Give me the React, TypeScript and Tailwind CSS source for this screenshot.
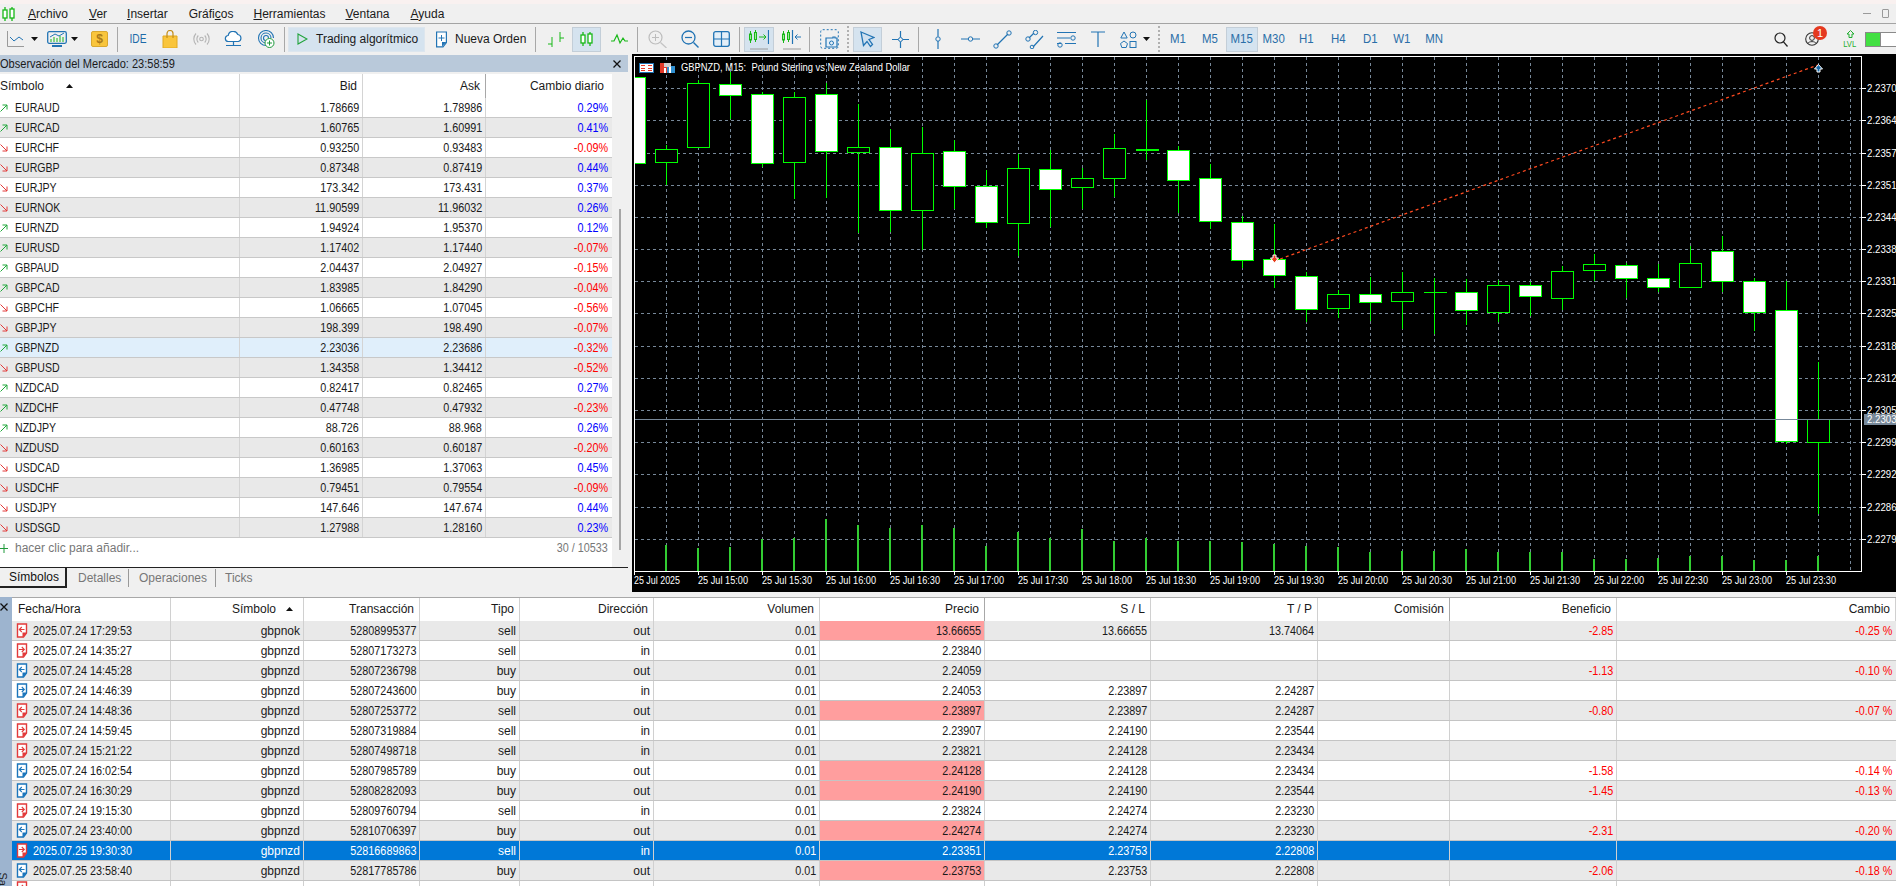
import type { ReactNode } from "react";

const FONT = "font-['Liberation_Sans',Arial,sans-serif]";
const BLUE = "#2274b4";
const GREEN = "#18b818";

// --- market watch data ---
const market: [string, boolean, string, string, string][] = [
  ["EURAUD", true, "1.78669", "1.78986", "0.29%"],
  ["EURCAD", true, "1.60765", "1.60991", "0.41%"],
  ["EURCHF", false, "0.93250", "0.93483", "-0.09%"],
  ["EURGBP", false, "0.87348", "0.87419", "0.44%"],
  ["EURJPY", false, "173.342", "173.431", "0.37%"],
  ["EURNOK", false, "11.90599", "11.96032", "0.26%"],
  ["EURNZD", true, "1.94924", "1.95370", "0.12%"],
  ["EURUSD", true, "1.17402", "1.17440", "-0.07%"],
  ["GBPAUD", true, "2.04437", "2.04927", "-0.15%"],
  ["GBPCAD", true, "1.83985", "1.84290", "-0.04%"],
  ["GBPCHF", false, "1.06665", "1.07045", "-0.56%"],
  ["GBPJPY", false, "198.399", "198.490", "-0.07%"],
  ["GBPNZD", true, "2.23036", "2.23686", "-0.32%"],
  ["GBPUSD", false, "1.34358", "1.34412", "-0.52%"],
  ["NZDCAD", true, "0.82417", "0.82465", "0.27%"],
  ["NZDCHF", true, "0.47748", "0.47932", "-0.23%"],
  ["NZDJPY", true, "88.726", "88.968", "0.26%"],
  ["NZDUSD", false, "0.60163", "0.60187", "-0.20%"],
  ["USDCAD", false, "1.36985", "1.37063", "0.45%"],
  ["USDCHF", false, "0.79451", "0.79554", "-0.09%"],
  ["USDJPY", false, "147.646", "147.674", "0.44%"],
  ["USDSGD", false, "1.27988", "1.28160", "0.23%"],
];

// --- history data ---
type Deal = {
  d: string; s: string; t: string; k: string; dir: string; p: string;
  sl?: string; tp?: string; b?: string; c?: string;
};
const deals: Deal[] = [
  { d: "2025.07.24 17:29:53", s: "gbpnok", t: "52808995377", k: "sell", dir: "out", p: "13.66655", sl: "13.66655", tp: "13.74064", b: "-2.85", c: "-0.25 %" },
  { d: "2025.07.24 14:35:27", s: "gbpnzd", t: "52807173273", k: "sell", dir: "in", p: "2.23840" },
  { d: "2025.07.24 14:45:28", s: "gbpnzd", t: "52807236798", k: "buy", dir: "out", p: "2.24059", b: "-1.13", c: "-0.10 %" },
  { d: "2025.07.24 14:46:39", s: "gbpnzd", t: "52807243600", k: "buy", dir: "in", p: "2.24053", sl: "2.23897", tp: "2.24287" },
  { d: "2025.07.24 14:48:36", s: "gbpnzd", t: "52807253772", k: "sell", dir: "out", p: "2.23897", sl: "2.23897", tp: "2.24287", b: "-0.80", c: "-0.07 %" },
  { d: "2025.07.24 14:59:45", s: "gbpnzd", t: "52807319884", k: "sell", dir: "in", p: "2.23907", sl: "2.24190", tp: "2.23544" },
  { d: "2025.07.24 15:21:22", s: "gbpnzd", t: "52807498718", k: "sell", dir: "in", p: "2.23821", sl: "2.24128", tp: "2.23434" },
  { d: "2025.07.24 16:02:54", s: "gbpnzd", t: "52807985789", k: "buy", dir: "out", p: "2.24128", sl: "2.24128", tp: "2.23434", b: "-1.58", c: "-0.14 %" },
  { d: "2025.07.24 16:30:29", s: "gbpnzd", t: "52808282093", k: "buy", dir: "out", p: "2.24190", sl: "2.24190", tp: "2.23544", b: "-1.45", c: "-0.13 %" },
  { d: "2025.07.24 19:15:30", s: "gbpnzd", t: "52809760794", k: "sell", dir: "in", p: "2.23824", sl: "2.24274", tp: "2.23230" },
  { d: "2025.07.24 23:40:00", s: "gbpnzd", t: "52810706397", k: "buy", dir: "out", p: "2.24274", sl: "2.24274", tp: "2.23230", b: "-2.31", c: "-0.20 %" },
  { d: "2025.07.25 19:30:30", s: "gbpnzd", t: "52816689863", k: "sell", dir: "in", p: "2.23351", sl: "2.23753", tp: "2.22808" },
  { d: "2025.07.25 23:58:40", s: "gbpnzd", t: "52817785786", k: "buy", dir: "out", p: "2.23753", sl: "2.23753", tp: "2.22808", b: "-2.06", c: "-0.18 %" },
];

// --- candles: [k, bodyTop, bodyBottom, wickTop, wickBottom, white], y = 60 + v / 3 ---
const candles: [number, number, number, number, number, boolean][] = [
  [-1, 52, 310, 52, 310, true], [0, 268, 305, 255, 375, false], [1, 70, 260, 60, 265, false],
  [2, 73, 106, 35, 178, true], [3, 103, 310, 95, 322, true], [4, 112, 307, 95, 416, false],
  [5, 103, 274, 68, 413, true], [6, 262, 277, 133, 518, false], [7, 262, 451, 208, 517, true],
  [8, 280, 451, 202, 571, false], [9, 274, 379, 240, 446, true], [10, 379, 487, 331, 503, true],
  [11, 325, 490, 283, 589, false], [12, 328, 388, 271, 500, true], [13, 355, 382, 325, 446, false],
  [14, 265, 355, 223, 410, false], [15, 267, 272, 121, 301, false], [16, 271, 361, 259, 460, true],
  [17, 355, 484, 313, 506, true], [18, 487, 601, 469, 625, true], [19, 598, 646, 493, 684, true],
  [20, 649, 748, 637, 787, true], [21, 703, 745, 690, 773, false], [22, 703, 727, 652, 784, true],
  [23, 697, 724, 637, 806, false], [24, 697, 697, 655, 823, false], [25, 697, 751, 658, 795, true],
  [26, 676, 757, 660, 787, false], [27, 676, 709, 665, 769, true], [28, 634, 715, 619, 751, false],
  [29, 613, 631, 583, 664, false], [30, 616, 655, 610, 715, true], [31, 655, 682, 612, 697, true],
  [32, 610, 682, 558, 682, false], [33, 574, 664, 529, 697, true], [34, 664, 757, 655, 812, true],
  [35, 751, 1144, 664, 1153, true], [36, 1078, 1147, 907, 1363, false],
];
const volumes = [
  615, 624, 621, 598, 594, 537, 555, 564, 554, 564, 618, 576, 594, 567, 603, 594, 603, 603, 606,
  612, 618, 621, 636, 633, 633, 627, 636, 636, 636, 657, 657, 654, 648, 648, 660, 660, 648,
];
const gridY = [88, 120, 153, 185, 217, 249, 281, 313, 346, 378, 410, 442, 474, 507, 539];
const prices = ["2.23705", "2.23640", "2.23575", "2.23510", "2.23445", "2.23380", "2.23315", "2.23250", "2.23185", "2.23120", "2.23055", "2.22990", "2.22925", "2.22860", "2.22795"];
const times = ["15:00", "15:30", "16:00", "16:30", "17:00", "17:30", "18:00", "18:30", "19:00", "19:30", "20:00", "20:30", "21:00", "21:30", "22:00", "22:30", "23:00", "23:30"];
const gridX = Array.from({ length: 38 }, (_, k) => 666 + 32 * k);

function Ic({ w, h = 16, className, children }: { w: number; h?: number; className?: string; children: ReactNode }) {
  return (
    <svg width={w} height={h} viewBox={`0 0 ${w} ${h}`} fill="none" className={`shrink-0 ${className ?? ""}`}>
      {children}
    </svg>
  );
}

function Tri({ className }: { className: string }) {
  return (
    <svg width="7" height="4" viewBox="0 0 7 4" className={`shrink-0 ${className}`}>
      <polygon points="0,0 7,0 3.5,4" fill="#111" />
    </svg>
  );
}

function Sep({ className }: { className: string }) {
  return <div className={`w-px h-[25px] bg-[#a8a8a8] shrink-0 ${className}`} />;
}

function Grip({ className }: { className: string }) {
  return <div className={`w-[2px] h-[26px] shrink-0 border-l-2 border-dotted border-[#b0b0b0] ${className}`} />;
}

function Candles({ c = "#18b818" }: { c?: string }) {
  return (
    <g stroke={c} strokeWidth="1.3">
      <path d="M3 1V15M10 1V15" />
      <rect x="1" y="4" width="4" height="8" fill="#fff" />
      <rect x="8" y="3" width="4" height="9" fill="#fff" />
    </g>
  );
}

// the narrow pair of candles on the autoscroll and chart shift buttons
function MiniCandles() {
  return (
    <g stroke="#18b818">
      <path d="M1.500 2V14M6.500 1V13" />
      <rect x=".5" y="5" width="2" height="6" fill="#9be89b" />
      <rect x="5.500" y="3.500" width="2" height="7" fill="#9be89b" />
    </g>
  );
}

function ActiveBtn({ w, className, children }: { w: string; className: string; children: ReactNode }) {
  return (
    <div className={`${w} ${className} h-[25px] shrink-0 flex items-center justify-center bg-[#d5e3ef] border border-[#c3ced8]`}>
      {children}
    </div>
  );
}

function Toolbar() {
  const periods = ["M1", "M5", "M15", "M30", "H1", "H4", "D1", "W1", "MN"];
  return (
    <div className="h-[30px] flex items-center bg-[#f0f0f0] shrink-0">
      <Ic w={17} className="ml-[7px]">
        <path d="M.5 0V15.5H17" stroke="#9a9a9a" />
        <path d="M3 6l4 4 5-4 4 3" stroke={BLUE} />
      </Ic>
      <Tri className="ml-[7px]" />
      <Ic w={20} className="ml-[9px]">
        <rect x=".7" y=".7" width="18.6" height="11.6" rx="1.5" stroke={BLUE} strokeWidth="1.3" />
        <path d="M4 11V8M7 11V6M10 11V7M13 11V5M16 11V6" stroke={GREEN} />
        <path d="M3 6l5-3 4 2 5-3" stroke={BLUE} />
        <path d="M5 15h10" stroke={BLUE} strokeWidth="2" />
      </Ic>
      <Tri className="ml-[4px]" />
      <div className="ml-[13px] w-[17px] h-[16px] rounded-[2px] bg-[#f9c53c] border border-[#d9a830] flex items-center justify-center text-[12px] font-bold text-[#a9791a] shrink-0">$</div>
      <Sep className="ml-[9px]" />
      <div className="ml-[11px] w-[17px] text-[12px] text-[#1d6aa8] flex justify-center shrink-0">
        <span className="inline-block scale-x-[0.85]">IDE</span>
      </div>
      <Ic w={16} h={18} className="ml-[16px]">
        <path d="M1 6h14v12H1z" fill="#f9c53c" stroke="#e0a820" />
        <path d="M5 8V3.5a3 3 0 0 1 6 0V8" stroke="#c48e18" strokeWidth="1.2" />
      </Ic>
      <Ic w={17} className="ml-[15px]">
        <g stroke="#b4b4b4" strokeWidth="1.1">
          <circle cx="8.5" cy="8" r="1.8" />
          <path d="M5.3 4.5a5 5 0 0 0 0 7M11.7 4.5a5 5 0 0 1 0 7M3 2.5a8 8 0 0 0 0 11M14 2.5a8 8 0 0 1 0 11" />
        </g>
      </Ic>
      <Ic w={19} className="ml-[14px]">
        <path d="M4.5 10.5a3 3 0 0 1-.3-6 5 5 0 0 1 9.6-1 3.6 3.6 0 0 1 .6 7z" stroke={BLUE} strokeWidth="1.2" fill="#fff" />
        <path d="M9.5 10.5V14M2 14.5h15" stroke={BLUE} strokeWidth="1.2" />
      </Ic>
      <Ic w={18} h={18} className="ml-[14px]">
        <g stroke={BLUE} strokeWidth="1.1">
          <path d="M9 15.5A7.5 7.5 0 1 1 16.5 8" />
          <path d="M8.5 13A5 5 0 1 1 14 8" />
          <path d="M8.5 10.5A2.5 2.5 0 1 1 11.5 8" />
        </g>
        <circle cx="12.5" cy="13" r="4.5" fill="#fff" stroke="#1e9a3c" />
        <path d="M12.5 10.5v5M10 13h5" stroke="#1e9a3c" />
      </Ic>
      <Sep className="ml-[9px]" />
      <div className="ml-[3px] w-[137px] h-[25px] shrink-0 bg-[#d5e3ef] border border-[#dde6ee] flex items-center">
        <Ic w={11} h={12} className="ml-[8px]">
          <path d="M1 1l9 5-9 5z" stroke="#1fa33a" strokeWidth="1.1" />
        </Ic>
        <span className="ml-[8px] text-[12px] text-[#1a1a1a] whitespace-nowrap">Trading algorítmico</span>
      </div>
      <Ic w={13} h={17} className="ml-[10px]">
        <path d="M1.6 1h9.8v10.5L8 15.8H1.6z" stroke={BLUE} strokeWidth="1.2" fill="#fff" />
        <path d="M7 15.5l4.5-4.5H7z" fill={BLUE} />
        <path d="M6.5 4v6M3.5 7h6" stroke={BLUE} />
      </Ic>
      <span className="ml-[7px] w-[70px] text-[12px] text-[#1a1a1a] whitespace-nowrap shrink-0">Nueva Orden</span>
      <Sep className="ml-[10px]" />
      <Ic w={17} className="ml-[11px]">
        <path d="M5 6V16M1 13h4M13 1V11M13 7h4" stroke={GREEN} />
      </Ic>
      <ActiveBtn w="w-[29px]" className="ml-[8px]">
        <Ic w={13}><Candles /></Ic>
      </ActiveBtn>
      <Ic w={17} className="ml-[10px]">
        <path d="M0 10h3l3-6 3 8 3-5 2 3h3" stroke={GREEN} strokeWidth="1.2" />
      </Ic>
      <Sep className="ml-[9px]" />
      <Ic w={19} h={18} className="ml-[10px]">
        <circle cx="7.5" cy="7.5" r="6.5" stroke="#bdbdbd" strokeWidth="1.2" />
        <path d="M12.5 12.5l6 5.5" stroke="#c4c4c4" strokeWidth="1.3" />
        <path d="M7.5 4v7M4 7.5h7" stroke="#bdbdbd" />
      </Ic>
      <Ic w={18} h={18} className="ml-[14px]">
        <circle cx="7.5" cy="7.5" r="6.5" stroke={BLUE} strokeWidth="1.3" />
        <path d="M12.5 12.5l5 5" stroke={BLUE} strokeWidth="1.4" />
        <path d="M4 7.5h7" stroke={BLUE} strokeWidth="1.2" />
      </Ic>
      <Ic w={17} className="ml-[14px]">
        <rect x=".7" y=".7" width="15.6" height="14.6" rx="2" fill="#e4eff8" stroke={BLUE} strokeWidth="1.3" />
        <path d="M8.5 1v14M1 8h15" stroke={BLUE} strokeWidth="1.2" />
      </Ic>
      <Sep className="ml-[9px]" />
      <ActiveBtn w="w-[30px]" className="ml-[4px]">
        <Ic w={20} h={21}>
          <MiniCandles />
          <path d="M10 8h7M14.500 5.500L17 8l-2.500 2.500" stroke={GREEN} />
          <path d="M19.500 1V15" stroke={BLUE} strokeWidth="1.2" />
          <path d="M1 20h18" stroke="#9a9a9a" />
        </Ic>
      </ActiveBtn>
      <Ic w={19} h={21} className="ml-[8px]">
        <MiniCandles />
        <path d="M10.500 1V15" stroke={BLUE} strokeWidth="1.2" />
        <path d="M19 8h-6M15.500 5.500L13 8l2.500 2.500" stroke={BLUE} />
        <path d="M1 20h18" stroke="#9a9a9a" />
      </Ic>
      <Sep className="ml-[8px]" />
      <Ic w={19} h={20} className="ml-[10px]">
        <rect x=".7" y=".7" width="17.6" height="18.6" rx="2" stroke={BLUE} strokeDasharray="2 2" />
        <path d="M6 9h7v-1h2v1h2v9H6z" fill="#e4eff8" stroke={BLUE} strokeWidth="1.2" />
        <circle cx="11.5" cy="14" r="2" stroke={BLUE} />
      </Ic>
      <Grip className="ml-[8px]" />
      <ActiveBtn w="w-[29px]" className="ml-[4px]">
        <Ic w={15} h={17}>
          <path d="M1 1l13 5.5-5 2 3.5 5-2 2-3.5-5-3.5 4z" fill="#cfe0ef" stroke={BLUE} strokeWidth="1.3" />
        </Ic>
      </ActiveBtn>
      <Ic w={17} h={17} className="ml-[10px]">
        <path d="M8.5 0v6M8.5 11v6M0 8.5h6M11 8.5h6" stroke={BLUE} strokeWidth="1.2" />
        <circle cx="8.5" cy="8.5" r="2" stroke={BLUE} />
      </Ic>
      <Sep className="ml-[9px]" />
      <Ic w={10} h={20} className="ml-[14px]">
        <path d="M5 0v7.5M5 12v8" stroke={BLUE} strokeWidth="1.2" />
        <circle cx="5" cy="10" r="2.2" stroke={BLUE} />
      </Ic>
      <Ic w={19} h={10} className="ml-[18px]">
        <path d="M0 5h7M12 5h7" stroke={BLUE} strokeWidth="1.2" />
        <circle cx="9.5" cy="5" r="2.2" stroke={BLUE} />
      </Ic>
      <Ic w={19} h={19} className="ml-[13px]">
        <path d="M4 15L15 4" stroke={BLUE} strokeWidth="1.2" />
        <circle cx="3" cy="16" r="2.2" stroke={BLUE} />
        <circle cx="16" cy="3" r="2.2" stroke={BLUE} />
      </Ic>
      <Ic w={19} h={19} className="ml-[13px]">
        <path d="M4 8l5-5M8 17l10-11" stroke={BLUE} strokeWidth="1.2" />
        <circle cx="3" cy="9" r="2.2" stroke={BLUE} />
        <circle cx="10.5" cy="2.5" r="2.2" stroke={BLUE} />
        <circle cx="7" cy="17" r="1.8" stroke={BLUE} />
      </Ic>
      <Ic w={19} h={17} className="ml-[13px]">
        <path d="M0 1.5h19M0 7h13M0 12.5h4M8 12.5h11" stroke={BLUE} strokeWidth="1.2" />
        <circle cx="16" cy="7" r="2.2" stroke={BLUE} />
        <circle cx="3" cy="14" r="2.2" stroke={BLUE} />
      </Ic>
      <Ic w={14} h={16} className="ml-[15px]">
        <path d="M0 1h14M7 1v15" stroke={BLUE} strokeWidth="1.2" />
      </Ic>
      <Ic w={17} h={17} className="ml-[15px]">
        <path d="M4 1l3.2 6H.8z" stroke={BLUE} />
        <circle cx="13" cy="4" r="3" stroke={BLUE} />
        <path d="M4 10l3.5 2.6-1.3 3.9H1.8L.5 12.6z" stroke={BLUE} />
        <rect x="10" y="10.5" width="6" height="6" stroke={BLUE} />
      </Ic>
      <Tri className="ml-[6px]" />
      <Grip className="ml-[8px]" />
      <div className="ml-[2px] flex shrink-0">
        {periods.map((p) => (
          <div key={p} className={`w-[32px] h-[25px] flex items-center justify-center text-[13px] text-[#2a6ea8] ${p === "M15" ? "bg-[#d5e3ef] border border-[#c3ced8]" : ""}`}>
            <span className="inline-block scale-x-[0.88]">{p}</span>
          </div>
        ))}
      </div>
      <div className="ml-auto flex items-center shrink-0">
        <Ic w={14} h={15}>
          <circle cx="6" cy="6" r="5" stroke="#222" strokeWidth="1.2" />
          <path d="M9.5 9.8l4 4.7" stroke="#222" strokeWidth="1.3" />
        </Ic>
        <div className="relative ml-[17px] w-[14px] h-[14px]">
          <Ic w={14} h={14}>
            <circle cx="7" cy="7" r="6.3" stroke="#333" strokeWidth="1.1" />
            <circle cx="7" cy="6" r="2.4" stroke="#333" />
            <path d="M2.8 11.5c1-2.5 7.4-2.5 8.4 0" stroke="#333" />
          </Ic>
          <div className="absolute left-[8px] top-[-6px] w-[14px] h-[14px] rounded-full bg-[#e5391f] text-white text-[11px] flex items-center justify-center">1</div>
        </div>
        <div className="ml-[25px] w-[12px] flex flex-col items-center text-[#1fae2f] leading-none">
          <Ic w={9} h={8}>
            <path d="M4.5.5L8 4H6v3.5H3V4H1z" stroke="#1fae2f" />
          </Ic>
          <span className="mt-[2px] text-[9px] inline-block scale-x-[0.85]">LVL</span>
        </div>
        <div className="ml-[9px] w-[31px] h-[15px] bg-white border border-[#8a8a8a] border-r-0 flex">
          <div className="w-[15px] bg-[#42e042] border-r border-[#8a8a8a]" />
        </div>
      </div>
    </div>
  );
}

function TrendArrow({ up }: { up: boolean }) {
  const c = up ? "#1fa83a" : "#e23a3a";
  return (
    <svg width="8" height="8" viewBox="0 0 8 8" fill="none" className="shrink-0">
      <path d={up ? "M.5 7.5L7 1M2.5 1H7V5.5" : "M.5.5L7 7M2.5 7H7V2.5"} stroke={c} strokeWidth="1" />
    </svg>
  );
}

function SortTri({ className }: { className: string }) {
  return (
    <svg width="7" height="4" viewBox="0 0 7 4" className={className}>
      <polygon points="0,4 7,4 3.5,0" fill="#111" />
    </svg>
  );
}

function MarketWatch() {
  return (
    <div className="w-[632px] shrink-0 flex flex-col">
      <div className="mt-px h-[17px] w-[628px] bg-[#b9c9da] flex items-center justify-between text-[12px] text-[#1a1a1a]">
        <span className="inline-block origin-left scale-x-[0.92] whitespace-nowrap">Observación del Mercado: 23:58:59</span>
        <svg width="8" height="8" viewBox="0 0 8 8" className="mr-[7px]"><path d="M.5.5l7 7M7.5.5l-7 7" stroke="#111" strokeWidth="1.3" /></svg>
      </div>
      <div className="mt-[2px] h-[493px] flex">
        <div className="w-[612px] bg-white text-[12px] text-[#1a1a1a]">
          <div className="h-[24px] grid grid-cols-[240px_123px_123px_126px]">
            <div className="flex items-center border-r border-[#d4d4d4]">
              <span>Símbolo</span>
              <SortTri className="ml-[22px]" />
            </div>
            <div className="flex items-center justify-end pr-[5px] border-r border-[#d4d4d4]">Bid</div>
            <div className="flex items-center justify-end pr-[5px] border-r border-[#a8a8a8]">Ask</div>
            <div className="flex items-center justify-end pr-[8px]">Cambio diario</div>
          </div>
          {market.map(([sym, up, bid, ask, chg], i) => (
            <div
              key={sym}
              className={`h-[20px] grid grid-cols-[240px_123px_123px_126px] border-b border-[#c8c8c8] ${sym === "GBPNZD" ? "bg-[#e0effb]" : i % 2 === 1 ? "bg-[#e9e9e9]" : "bg-white"}`}
            >
              <div className="flex items-center border-r border-[#d4d4d4]">
                <TrendArrow up={up} />
                <span className="ml-[7px] inline-block origin-left scale-x-[0.88]">{sym}</span>
              </div>
              <div className="flex items-center justify-end pr-[3px] border-r border-[#d4d4d4]">
                <span className="inline-block origin-right scale-x-90">{bid}</span>
              </div>
              <div className="flex items-center justify-end pr-[3px] border-r border-[#d4d4d4]">
                <span className="inline-block origin-right scale-x-90">{ask}</span>
              </div>
              <div className={`flex items-center justify-end pr-[4px] ${chg.startsWith("-") ? "text-[#ff0000]" : "text-[#0000ff]"}`}>
                <span className="inline-block origin-right scale-x-90">{chg}</span>
              </div>
            </div>
          ))}
          <div className="h-[20px] flex items-center justify-between text-[#777]">
            <div className="flex items-center">
              <svg width="8" height="9" viewBox="0 0 8 9" className="shrink-0"><path d="M4 0v9M0 4.5h8" stroke="#1f9a3a" /></svg>
              <span className="ml-[7px]">hacer clic para añadir...</span>
            </div>
            <span className="mr-[4px] inline-block origin-right scale-x-90">30 / 10533</span>
          </div>
        </div>
        <div className="flex-1 pl-[7px] pt-[135px]">
          <div className="w-[2px] h-[341px] bg-[#a6a6a6]" />
        </div>
      </div>
      <div className="w-[628px] h-[21px] border-t border-[#222] flex text-[12px] text-[#777]">
        <div className="w-[67px] h-[20px] pl-[9px] flex items-center text-[#111] border-r-2 border-b-2 border-[#222]">Símbolos</div>
        <div className="w-[62px] h-[18px] mt-[1px] pl-[11px] flex items-center border-r border-[#999]">Detalles</div>
        <div className="w-[87px] h-[18px] mt-[1px] pl-[10px] flex items-center border-r border-[#999]">Operaciones</div>
        <div className="h-[18px] mt-[1px] pl-[9px] flex items-center">Ticks</div>
      </div>
    </div>
  );
}

function ChartIcons() {
  return (
    <g shapeRendering="crispEdges">
      <rect x="639.5" y="63.5" width="14" height="9" fill="#fff" stroke="#1b6fb0" />
      <path d="M641 65.5h4M641 68h4M641 70.5h4M648 65.5h4M648 68h4M648 70.5h4" stroke="#e23a2a" />
      <path d="M660 63h7v10h-7z" fill="#e23a2a" />
      <path d="M667 66h8v7h-8z" fill="#2f8fd0" />
      <path d="M664 63h7v4h-7z" fill="#cfcfcf" />
      <path d="M664 73v-5h2v5zM669 73v-6h2v6z" fill="#fff" />
    </g>
  );
}

function Chart() {
  const txt = "font-['Liberation_Sans',Arial,sans-serif] text-[11px] fill-white";
  return (
    <div className="flex-1 min-w-0 flex flex-col">
      <svg width="1264" height="538" viewBox="632 54 1264 538" className="block bg-black">
        <defs>
          <clipPath id="plot"><rect x="635" y="57" width="1227" height="514" /></clipPath>
        </defs>
        <g stroke="#778899" strokeDasharray="3 3" shapeRendering="crispEdges">
          {gridX.map((x) => <line key={x} x1={x + 0.5} y1="57" x2={x + 0.5} y2="571" />)}
          {gridY.map((y) => <line key={y} x1="635" y1={y + 0.5} x2="1862" y2={y + 0.5} />)}
        </g>
        <g clipPath="url(#plot)" shapeRendering="crispEdges">
          {candles.map(([k, top, bot, wt, wb, white]) => {
            const x = 666.5 + 32 * k;
            const y1 = Math.round(60 + top / 3) + 0.5;
            const y2 = Math.round(60 + bot / 3) + 0.5;
            return (
              <g key={k} stroke="#00ff00">
                <line x1={x} x2={x} y1={60 + wt / 3} y2={60 + wb / 3} />
                {k === 24 ? (
                  <line x1={x - 11} x2={x + 12} y1={y1} y2={y1} />
                ) : k === 15 ? (
                  <rect x={x - 11} y={y1 - 1} width="23" height="2" fill="#00ff00" stroke="none" />
                ) : (
                  <rect x={x - 11} y={y1} width="22" height={y2 - y1} fill={white ? "#fff" : "#000"} />
                )}
              </g>
            );
          })}
          {volumes.map((v, k) => (
            <rect key={k} x={666 + 32 * k - 1} y={340 + v / 3} width="2" height={571 - (340 + v / 3)} fill="#32cd32" />
          ))}
        </g>
        <line x1="635" y1="419.5" x2="1862" y2="419.5" stroke="#778899" shapeRendering="crispEdges" />
        <line x1="1274.5" y1="261" x2="1818" y2="65" stroke="#ff4a20" strokeWidth="1.2" strokeDasharray="3 3" />
        <path d="M1270.5 258h2.5v-3h3v3h2.5l-4 5z" fill="#e8401f" stroke="#fff" />
        <path d="M1814.5 69l4-4.500 4 4.500h-2.500v3h-3v-3z" fill="#1668a8" stroke="#fff" />
        <g stroke="#fff" shapeRendering="crispEdges">
          <path d="M634.500 56.500H1861.500V571.500H634.500Z" fill="none" />
          {gridY.map((y) => <line key={y} x1="1862" y1={y + 0.5} x2="1866" y2={y + 0.5} />)}
          {gridX.filter((_, k) => k % 2 === 1 && k < 37).map((x) => <line key={x} x1={x + 0.5} y1="571" x2={x + 0.5} y2="575" />)}
          <line x1="634.500" y1="571" x2="634.500" y2="575" />
        </g>
        {prices.map((p, i) => (
          <text key={p} x="1867" y={gridY[i] + 4} textLength="35" lengthAdjust="spacingAndGlyphs" className={txt}>{p}</text>
        ))}
        <rect x="1864" y="414" width="32" height="11" fill="#778899" />
        <text x="1867" y="423" textLength="35" lengthAdjust="spacingAndGlyphs" className={txt}>2.23036</text>
        <text x="634" y="584" textLength="46" lengthAdjust="spacingAndGlyphs" className={txt}>25 Jul 2025</text>
        {times.map((t, i) => (
          <text key={t} x={698 + 64 * i} y="584" textLength="50" lengthAdjust="spacingAndGlyphs" className={txt}>{`25 Jul ${t}`}</text>
        ))}
        <ChartIcons />
        <text x="681" y="71" textLength="229" lengthAdjust="spacingAndGlyphs" className={txt}>GBPNZD, M15:{"\u00a0\u00a0"}Pound Sterling vs New Zealand Dollar</text>
      </svg>
      <div className="h-[5px] bg-[#f0f0f0]" />
    </div>
  );
}

function DealIcon({ buy, out }: { buy: boolean; out: boolean }) {
  const c = buy ? "#1b75bb" : "#e23a3a";
  return (
    <svg width="12" height="15" viewBox="0 0 12 15" fill="none" className="shrink-0">
      <path d="M1.500 1H10.500V10L7.500 14H1.500Z" fill="#fff" stroke={c} strokeWidth="1.4" />
      <path d="M6.500 14.500L11 9.500H6.500Z" fill={c} />
      <path d={out ? "M8.500 6.500H3.500M5.800 4L3.300 6.500L5.800 9" : "M3 6.500H8M5.800 4L8.300 6.500L5.800 9"} stroke={c} strokeWidth="1.1" />
    </svg>
  );
}

const GRID2 = "grid grid-cols-[159px_133px_116px_100px_134px_166px_165px_166px_167px_132px_167px_279px]";

function HistoryCell({ v, line = "border-[#d0d0d0]", tone = "", narrow = true, pad = "pr-[3px]" }: { v?: string; line?: string; tone?: string; narrow?: boolean; pad?: string }) {
  return (
    <div className={`flex items-center justify-end ${pad} border-r ${line} ${tone}`}>
      {v && <span className={`inline-block origin-right whitespace-nowrap ${narrow ? "scale-x-90" : ""}`}>{v}</span>}
    </div>
  );
}

function History() {
  const heads = ["Transacción", "Tipo", "Dirección", "Volumen", "Precio", "S / L", "T / P", "Comisión", "Beneficio", "Cambio"];
  return (
    <div className="h-[289px] flex shrink-0 overflow-hidden">
      <div className="relative w-[12px] shrink-0 bg-[#9db4cf] overflow-hidden">
        <svg width="8" height="8" viewBox="0 0 8 8" className="mt-[6px]"><path d="M.5.5l7 7M7.5.5l-7 7" stroke="#111" strokeWidth="1.3" /></svg>
        <span className="absolute left-[-4px] bottom-[-1px] text-[11px] text-[#222] rotate-90 origin-center">Sa</span>
      </div>
      <div className="flex-1 bg-white border-t border-[#a8a8a8] text-[12px] text-[#1a1a1a]">
        <div className={`${GRID2} h-[23px]`}>
          <div className="pl-[6px] pb-px flex items-center border-r border-[#d0d0d0]">Fecha/Hora</div>
          <div className="flex items-center justify-end pr-[10px] pb-px border-r border-[#d0d0d0]">
            <span>Símbolo</span>
            <SortTri className="ml-[10px]" />
          </div>
          {heads.map((h) => (
            <HistoryCell key={h} v={h} narrow={false} pad="pr-[5px] pb-px" line={h === "Precio" || h === "Comisión" ? "border-[#a8a8a8]" : "border-[#d0d0d0]"} />
          ))}
        </div>
        {deals.map((r, i) => {
          const selected = i === 11;
          const loss = selected ? "" : "text-[#ff0000]";
          return (
            <div
              key={r.t}
              className={`${GRID2} h-[20px] border-b border-[#c4c4c4] ${selected ? "bg-[#0078d7] text-white" : i % 2 === 0 ? "bg-[#e9e9e9]" : "bg-white"}`}
            >
              <div className="flex items-center pl-[4px] border-r border-[#d0d0d0]">
                <DealIcon buy={r.k === "buy"} out={r.dir === "out"} />
                <span className="ml-[5px] inline-block origin-left scale-x-90 whitespace-nowrap">{r.d}</span>
              </div>
              <HistoryCell v={r.s} narrow={false} />
              <HistoryCell v={r.t} />
              <HistoryCell v={r.k} narrow={false} />
              <HistoryCell v={r.dir} narrow={false} />
              <HistoryCell v="0.01" />
              <HistoryCell v={r.p} tone={r.b && r.sl ? "bg-[#ff9e9e]" : ""} />
              <HistoryCell v={r.sl} />
              <HistoryCell v={r.tp} />
              <HistoryCell />
              <HistoryCell v={r.b} tone={loss} />
              <HistoryCell v={r.c} tone={loss} line="border-transparent" />
            </div>
          );
        })}
        <div className={`${GRID2} h-[6px]`}>
          <div className="pl-[4px] border-r border-[#d0d0d0]">
            <DealIcon buy={false} out={false} />
          </div>
          {heads.concat("").map((h) => (
            <HistoryCell key={h} line={h === "" ? "border-transparent" : "border-[#d0d0d0]"} />
          ))}
        </div>
      </div>
    </div>
  );
}

export default function App() {
  const menu: [string, string, string][] = [
    ["", "A", "rchivo"],
    ["", "V", "er"],
    ["", "I", "nsertar"],
    ["Gráfi", "c", "os"],
    ["", "H", "erramientas"],
    ["", "V", "entana"],
    ["", "A", "yuda"],
  ];
  const menuGaps = ["ml-[13px]", "ml-[21px]", "ml-[20px]", "ml-[21px]", "ml-[20px]", "ml-[20px]", "ml-[21px]"];
  return (
    <div className={`${FONT} w-[1896px] h-[886px] overflow-hidden flex flex-col bg-[#f0f0f0] text-[#1a1a1a]`}>
      <div className="h-[4px] bg-[#f9f1f0] shrink-0" />
      <div className="h-[20px] flex items-center border-b border-[#a4a4a4] shrink-0 text-[12px]">
        <Ic w={13} className="ml-[2px]"><Candles /></Ic>
        {menu.map(([a, b, c], i) => (
          <span key={a + b + c} className={`${menuGaps[i]} whitespace-nowrap`}>
            {a}<u>{b}</u>{c}
          </span>
        ))}
        <div className="ml-auto flex items-center mr-[7px]">
          <div className="w-[8px] h-px bg-[#9a9a9a]" />
          <div className="ml-[11px] w-[7px] h-[9px] border border-[#9a9a9a] rounded-[1px]" />
        </div>
      </div>
      <Toolbar />
      <div className="h-[543px] flex shrink-0">
        <MarketWatch />
        <Chart />
      </div>
      <History />
    </div>
  );
}
